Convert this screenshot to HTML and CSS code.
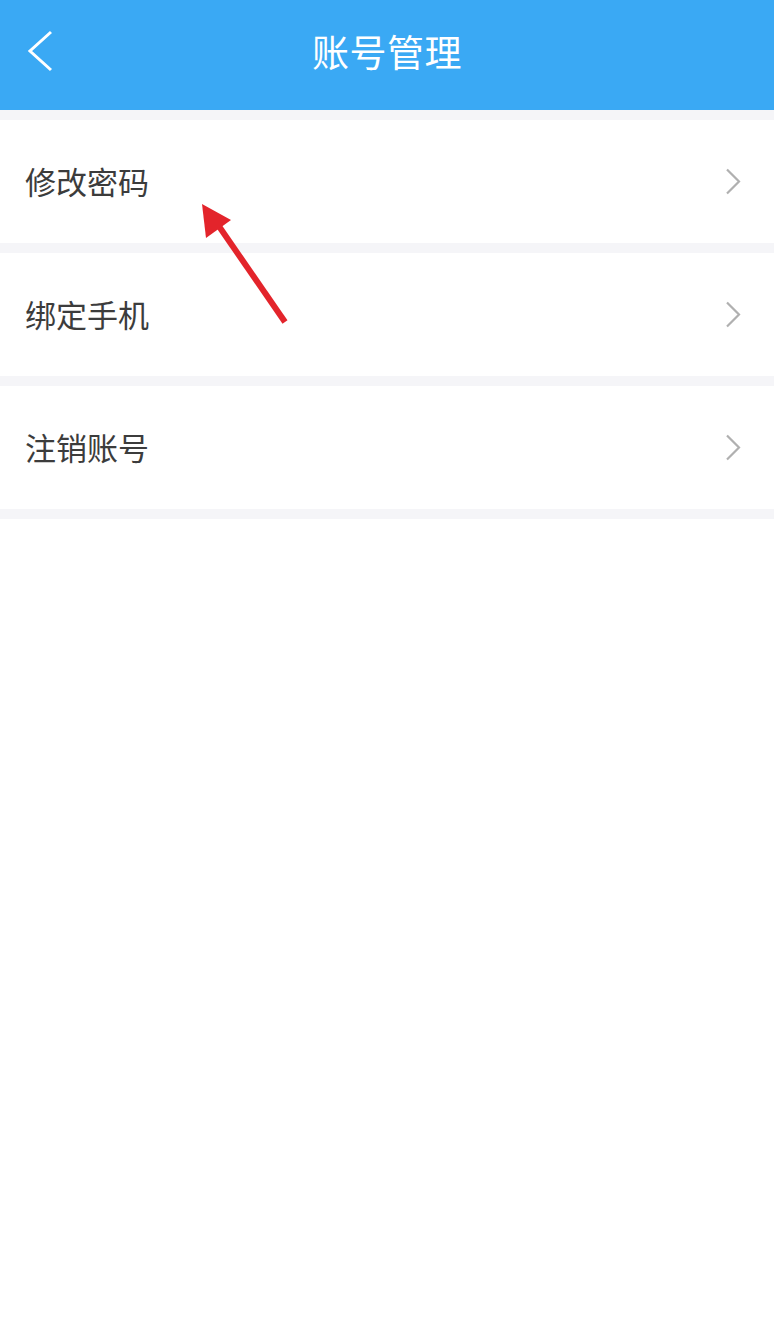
FILE: index.html
```html
<!DOCTYPE html>
<html lang="zh-CN">
<head>
<meta charset="utf-8">
<title>账号管理</title>
<link rel="stylesheet" href="styles.css">
</head>
<body>
<div class="page">
  <header class="topbar">
    <svg class="back" viewBox="0 0 26 42" width="26" height="42"><path d="M24 2 L3 21 L24 40" fill="none" stroke="#fff" stroke-width="3"/></svg>
    <h1 class="title">账号管理</h1>
  </header>
  <ul class="menu">
    <li class="item"><span class="label">修改密码</span><svg class="chev" viewBox="0 0 16 27" width="16" height="27"><path d="M2 1.5 L14 13.5 L2 25.5" fill="none" stroke="#b0b0b0" stroke-width="2.2"/></svg></li>
    <li class="item"><span class="label">绑定手机</span><svg class="chev" viewBox="0 0 16 27" width="16" height="27"><path d="M2 1.5 L14 13.5 L2 25.5" fill="none" stroke="#b0b0b0" stroke-width="2.2"/></svg></li>
    <li class="item"><span class="label">注销账号</span><svg class="chev" viewBox="0 0 16 27" width="16" height="27"><path d="M2 1.5 L14 13.5 L2 25.5" fill="none" stroke="#b0b0b0" stroke-width="2.2"/></svg></li>
  </ul>
  <svg class="pointer" viewBox="0 0 774 1317" width="774" height="1317">
    <line x1="285" y1="322" x2="216" y2="222" stroke="#e3242b" stroke-width="6" stroke-linecap="butt"/>
    <polygon points="202,204 231,220 206,238" fill="#e3242b"/>
  </svg>
</div>
</body>
</html>
```
FILE: styles.css
```css
html, body {
  margin: 0;
  padding: 0;
  background: #ffffff;
}
.page {
  position: relative;
  width: 774px;
  min-height: 1317px;
  font-family: "Noto Sans CJK SC", "Noto Sans", sans-serif;
}
.topbar {
  height: 110px;
  background: #3aa9f4;
  display: flex;
  align-items: center;
  justify-content: center;
  position: relative;
}
.back {
  position: absolute;
  left: 27px;
  top: 30px;
}
.title {
  margin: 0;
  color: #ffffff;
  font-size: 37px;
  font-weight: 400;
  line-height: 1;
  margin-top: -8px;
  letter-spacing: 0.5px;
}
.menu {
  list-style: none;
  margin: 0;
  padding: 10px 0 0;
  background: #f5f5f8;
  display: flex;
  flex-direction: column;
  gap: 10px;
  padding-bottom: 10px;
}
.item {
  height: 123px;
  background: #ffffff;
  display: flex;
  align-items: center;
  justify-content: space-between;
  padding: 0 33px 0 25px;
}
.label {
  font-size: 31px;
  color: #3c3c3c;
  line-height: 1;
  margin-top: -2px;
}
.chev {
  display: block;
}
.pointer {
  position: absolute;
  left: 0;
  top: 0;
  pointer-events: none;
}
```
